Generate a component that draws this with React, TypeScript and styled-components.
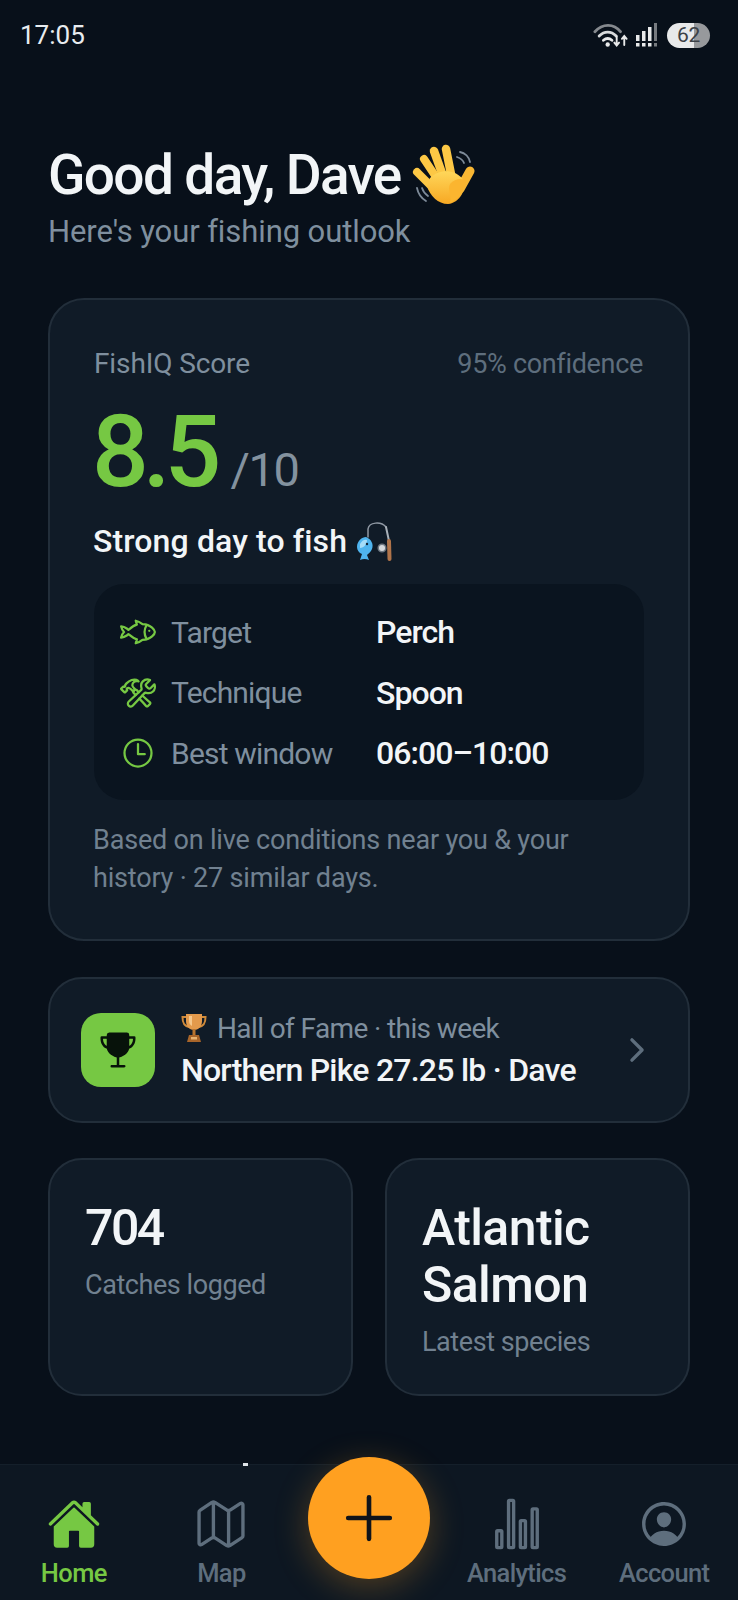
import React from "react";
import styled, { createGlobalStyle } from "styled-components";
import {
  IoAdd,
  IoChevronForward,
  IoConstructOutline,
  IoFishOutline,
  IoHome,
  IoMapOutline,
  IoPersonCircleOutline,
  IoStatsChartOutline,
  IoTimeOutline,
  IoTrophy,
} from "react-icons/io5";

const GlobalStyle = createGlobalStyle`
  html, body {
    margin: 0;
    background: #08101a;
  }
  * {
    box-sizing: border-box;
  }
`;

const Page = styled.div`
  width: 738px;
  height: 1600px;
  overflow: hidden;
  position: relative;
  background: #08101a;
  color: #f2f5f7;
  font-family: Roboto, "Noto Sans", sans-serif;
  letter-spacing: -0.02em;
  white-space: nowrap;
`;

const StatusBar = styled.div`
  height: 70px;
  padding: 0 28px 0 20px;
  display: flex;
  align-items: center;
  justify-content: space-between;
`;

const Clock = styled.span`
  font-size: 26px;
  letter-spacing: 0;
  color: #e8ecef;
`;

const StatusIcons = styled.div`
  display: flex;
  align-items: center;
  gap: 7px;
`;

const Battery = styled.div`
  width: 43px;
  height: 25px;
  margin-left: 2px;
  border-radius: 13px;
  background: linear-gradient(90deg, #e8e9ea 62%, #97999c 62%);
  color: #3c4147;
  font-size: 21px;
  display: flex;
  align-items: center;
  justify-content: center;
`;

const Main = styled.main`
  padding: 72px 48px 0;
`;

const Greeting = styled.h1`
  margin: 0;
  height: 66px;
  display: flex;
  align-items: center;
  gap: 11px;
  font-size: 55px;
  font-weight: 500;
  letter-spacing: -0.03em;
  line-height: 66px;
`;

const Sub = styled.p`
  margin: 2px 0 44px;
  font-size: 31px;
  line-height: 44px;
  letter-spacing: -0.003em;
  color: #7f8f9e;
`;

const Card = styled.section<{ $radius?: number }>`
  background: #101b27;
  border: 2px solid #222e3a;
  border-radius: ${(p) => p.$radius ?? 34}px;
`;

const ScoreCard = styled(Card)`
  height: 643px;
  padding: 43px 44px 0;
`;

const ScoreHead = styled.div`
  display: flex;
  align-items: center;
  justify-content: space-between;
  height: 40px;
`;

const ScoreTitle = styled.span`
  font-size: 28px;
  font-weight: 440;
  letter-spacing: -0.004em;
  color: #7f8f9e;
`;

const Confidence = styled.span`
  font-size: 27px;
  color: #5e6e7d;
  margin: 2px 1px 0 0;
`;

const ScoreLine = styled.div`
  display: flex;
  align-items: baseline;
  gap: 15px;
  height: 112px;
  margin: 13px 0 0 -2px;
`;

const ScoreValue = styled.span`
  font-size: 100px;
  line-height: 112px;
  font-weight: 500;
  letter-spacing: -0.06em;
  color: #76c843;
`;

const ScoreMax = styled.span`
  font-size: 47px;
  letter-spacing: -0.03em;
  color: #83929f;
`;

const Verdict = styled.div`
  display: flex;
  align-items: center;
  gap: 9px;
  height: 44px;
  margin: 11px 0 0 -1px;
  font-size: 32px;
  font-weight: 470;
  letter-spacing: 0.004em;
`;

const Panel = styled.div`
  margin-top: 21px;
  height: 216px;
  padding: 18px 26px;
  border-radius: 30px;
  background: #0a141f;
  display: grid;
  grid-template-columns: 36px 190px 1fr;
  grid-auto-rows: 60.5px;
  align-items: center;
  column-gap: 15px;
`;

const RowIcon = styled.span`
  display: flex;
  color: #76c843;
  font-size: 36px;
`;

const RowLabel = styled.span`
  font-size: 30px;
  letter-spacing: -0.027em;
  color: #7f8f9e;
`;

const RowValue = styled.span`
  font-size: 32px;
  font-weight: 470;
  letter-spacing: -0.03em;
`;

const Note = styled.p`
  margin: 21px 0 0 -1px;
  font-size: 27px;
  line-height: 38px;
  letter-spacing: -0.007em;
  color: #718190;
`;

const FameCard = styled(Card)`
  margin-top: 36px;
  height: 146px;
  padding: 0 30px 0 31px;
  display: flex;
  align-items: center;
  gap: 26px;
`;

const FameBadge = styled.div`
  width: 74px;
  height: 74px;
  border-radius: 20px;
  background: #76c843;
  color: #07120a;
  font-size: 40px;
  display: flex;
  align-items: center;
  justify-content: center;
`;

const FameText = styled.div`
  flex: 1;
`;

const FameLabel = styled.div`
  display: flex;
  align-items: center;
  gap: 10px;
  height: 40px;
  font-size: 28px;
  font-weight: 440;
  letter-spacing: -0.022em;
  color: #7f8f9e;
`;

const FameValue = styled.div`
  height: 44px;
  line-height: 44px;
  font-size: 32px;
  font-weight: 470;
  letter-spacing: -0.024em;
`;

const Chevron = styled.span`
  display: flex;
  font-size: 36px;
  color: #5e6e7d;
  margin-right: 3px;
`;

const Stats = styled.div`
  margin-top: 35px;
  display: grid;
  grid-template-columns: 1fr 1fr;
  gap: 32px;
`;

const StatCard = styled(Card)`
  height: 238px;
  padding: 40px 35px 0;
`;

const StatValue = styled.div<{ $digits?: boolean }>`
  font-size: 50px;
  line-height: 57px;
  font-weight: 470;
  letter-spacing: ${(p) => (p.$digits ? "-0.05em" : "-0.012em")};
`;

const StatLabel = styled.div`
  margin-top: 9px;
  font-size: 27px;
  line-height: 38px;
  letter-spacing: -0.016em;
  color: #718190;
`;

const Nav = styled.nav`
  position: fixed;
  left: 0;
  right: 0;
  bottom: 0;
  width: 738px;
  height: 136px;
  background: #0d1722;
  border-top: 1px solid #141f2a;
  display: grid;
  grid-template-columns: repeat(5, 1fr);
`;

const NavItem = styled.div<{ $active?: boolean }>`
  display: flex;
  flex-direction: column;
  align-items: center;
  padding-top: 32px;
  color: ${(p) => (p.$active ? "#76c843" : "#5e6e7d")};
  font-size: 25.500px;
  font-weight: 480;
  letter-spacing: -0.025em;
`;

const NavGlyph = styled.span`
  display: flex;
  font-size: 54px;
  height: 54px;
  margin-bottom: 7px;
  align-items: center;
`;

const Fab = styled.button`
  position: absolute;
  left: 308px;
  top: -8px;
  width: 122px;
  height: 122px;
  border: 0;
  border-radius: 50%;
  background: #ffa020;
  color: #10141a;
  font-size: 74px;
  padding: 0;
  display: flex;
  align-items: center;
  justify-content: center;
  box-shadow: 0 8px 34px rgba(255, 160, 32, 0.28);
`;

const Speck = styled.i`
  position: absolute;
  left: 243px;
  top: -2px;
  width: 5px;
  height: 3px;
  background: #dfe4e8;
`;

function WifiIcon() {
  return (
    <svg width="36" height="25" viewBox="0 0 38 26" fill="none" strokeLinecap="round">
      <path d="M2 9C10 0 22 0 29 9" stroke="#85898e" strokeWidth="3" />
      <path d="M6.500 13.500C12 8 19 8 24.500 13.500" stroke="#d8dadc" strokeWidth="3" />
      <path d="M11 18C14 15.500 17 15.500 20 18" stroke="#e8e9ea" strokeWidth="3" />
      <circle cx="15.500" cy="22.500" r="2.300" fill="#e8e9ea" />
      <path d="M25 14V23M22.500 20.500 25 23.500 27.500 20.500" stroke="#e8e9ea" strokeWidth="2" />
      <path d="M33 23V14M30.500 16.500 33 13.500 35.500 16.500" stroke="#e8e9ea" strokeWidth="2" />
    </svg>
  );
}

function SignalIcon() {
  return (
    <svg width="22" height="26" viewBox="0 0 22 26" fill="#e8e9ea">
      <rect x="0" y="13" width="3.500" height="6" />
      <rect x="0" y="21" width="3.500" height="3.500" />
      <rect x="6" y="9" width="3.500" height="10" />
      <rect x="6" y="21" width="3.500" height="3.500" />
      <rect x="12" y="5" width="3.500" height="14" />
      <rect x="12" y="21" width="3.500" height="3.500" />
      <rect x="18" y="1" width="3" height="18" fill="#777b80" />
      <rect x="18" y="21" width="3" height="3.500" fill="#777b80" />
    </svg>
  );
}

// waving hand, fingers are just fat round strokes over the palm
function WaveHand() {
  return (
    <svg width="64" height="62" viewBox="12 16 64 62" fill="none" strokeLinecap="round">
      <defs>
        <linearGradient id="hand" x1="0" y1="0" x2="0" y2="1">
          <stop offset="0" stopColor="#ffd75a" />
          <stop offset="1" stopColor="#f7a823" />
        </linearGradient>
      </defs>
      <path d="M60 24C65 25 69 29 70 34M57 29C60 30 63 32 64 35" stroke="#7d8a98" strokeWidth="1.800" />
      <path d="M17 60C18 65 21 70 26 73M22 60C23 63 25 66 28 68" stroke="#7d8a98" strokeWidth="1.800" />
      <g stroke="#fdc845">
        <path d="M17 44 33 60" strokeWidth="8" />
        <path d="M24 31 38 52" strokeWidth="8" />
        <path d="M34 23 43 48" strokeWidth="8.500" />
        <path d="M46 21 51 46" strokeWidth="8.500" />
        <path d="M70 43 60 61" strokeWidth="9" stroke="#f9b733" />
      </g>
      <path
        d="M30 50C38 42 52 40 62 50C68 60 60 75 48 76C38 76 30 68 27 58Z"
        fill="url(#hand)"
      />
      <path d="M50 56C55 50 63 50 66 53C64 63 58 72 50 75C52 68 47 62 50 56Z" fill="#fbb52f" />
    </svg>
  );
}

function FishingPole() {
  return (
    <svg width="36" height="40" viewBox="0 0 36 40" fill="none" strokeLinecap="round">
      <path d="M12 16V8C13 1 25 0 30 6" stroke="#8f98a3" strokeWidth="1.500" />
      <path d="M30 6 33 20" stroke="#a8b0b8" strokeWidth="2" />
      <path d="M33 20 33.500 38" stroke="#b0744a" strokeWidth="4" />
      <circle cx="26" cy="27" r="3.800" fill="#d5d9dc" stroke="#6d7680" strokeWidth="1.500" />
      <path
        d="M1 26C1 20 6 16 10 16C15 18 18 23 16 28C15 31 12 33 11 34L13 39C10 37.500 7 37.500 4 39L6 33C3 32 1 29 1 26Z"
        fill="#4fb4ee"
      />
      <path d="M4 23C6 19 9 18 11 19C11 23 8 27 4 27Z" fill="#a5dcf8" />
      <circle cx="11" cy="23" r="1.200" fill="#123" />
    </svg>
  );
}

function TrophyEmoji() {
  return (
    <svg width="26" height="30" viewBox="0 0 26 30" fill="none">
      <path d="M6 4H1.500C1.500 10 3 13 8 14M20 4H24.500C24.500 10 23 13 18 14" stroke="#d08a3a" strokeWidth="2" />
      <path d="M5 1H21V8C21 14 17 17 13 17C9 17 5 14 5 8Z" fill="#e39a4c" />
      <path d="M8 3H11V13C9 12 8 10 8 8Z" fill="#f6c88c" />
      <rect x="11.500" y="16" width="3" height="6" fill="#b8742e" />
      <path d="M8 22H18L20 29H6Z" fill="#a8652a" />
      <rect x="10" y="24" width="6" height="2.500" fill="#e8b26f" />
    </svg>
  );
}

const rows = [
  { icon: <IoFishOutline />, label: "Target", value: "Perch" },
  { icon: <IoConstructOutline />, label: "Technique", value: "Spoon" },
  { icon: <IoTimeOutline />, label: "Best window", value: "06:00–10:00" },
];

function App() {
  return (
    <Page>
      <GlobalStyle />
      <StatusBar>
        <Clock>17:05</Clock>
        <StatusIcons>
          <WifiIcon />
          <SignalIcon />
          <Battery>62</Battery>
        </StatusIcons>
      </StatusBar>

      <Main>
        <Greeting>
          Good day, Dave <WaveHand />
        </Greeting>
        <Sub>Here's your fishing outlook</Sub>

        <ScoreCard $radius={36}>
          <ScoreHead>
            <ScoreTitle>FishIQ Score</ScoreTitle>
            <Confidence>95% confidence</Confidence>
          </ScoreHead>
          <ScoreLine>
            <ScoreValue>8.5</ScoreValue>
            <ScoreMax>/10</ScoreMax>
          </ScoreLine>
          <Verdict>
            Strong day to fish <FishingPole />
          </Verdict>
          <Panel>
            {rows.map((r) => (
              <React.Fragment key={r.label}>
                <RowIcon>{r.icon}</RowIcon>
                <RowLabel>{r.label}</RowLabel>
                <RowValue>{r.value}</RowValue>
              </React.Fragment>
            ))}
          </Panel>
          <Note>
            Based on live conditions near you &amp; your
            <br />
            history · 27 similar days.
          </Note>
        </ScoreCard>

        <FameCard>
          <FameBadge>
            <IoTrophy />
          </FameBadge>
          <FameText>
            <FameLabel>
              <TrophyEmoji /> Hall of Fame · this week
            </FameLabel>
            <FameValue>Northern Pike 27.25 lb · Dave</FameValue>
          </FameText>
          <Chevron>
            <IoChevronForward />
          </Chevron>
        </FameCard>

        <Stats>
          <StatCard>
            <StatValue $digits>704</StatValue>
            <StatLabel>Catches logged</StatLabel>
          </StatCard>
          <StatCard>
            <StatValue>
              Atlantic
              <br />
              Salmon
            </StatValue>
            <StatLabel>Latest species</StatLabel>
          </StatCard>
        </Stats>
      </Main>

      <Nav>
        <Speck />
        <NavItem $active>
          <NavGlyph>
            <IoHome />
          </NavGlyph>
          Home
        </NavItem>
        <NavItem>
          <NavGlyph>
            <IoMapOutline />
          </NavGlyph>
          Map
        </NavItem>
        <div />
        <NavItem>
          <NavGlyph>
            <IoStatsChartOutline />
          </NavGlyph>
          Analytics
        </NavItem>
        <NavItem>
          <NavGlyph>
            <IoPersonCircleOutline />
          </NavGlyph>
          Account
        </NavItem>
        <Fab>
          <IoAdd />
        </Fab>
      </Nav>
    </Page>
  );
}

export default App;
